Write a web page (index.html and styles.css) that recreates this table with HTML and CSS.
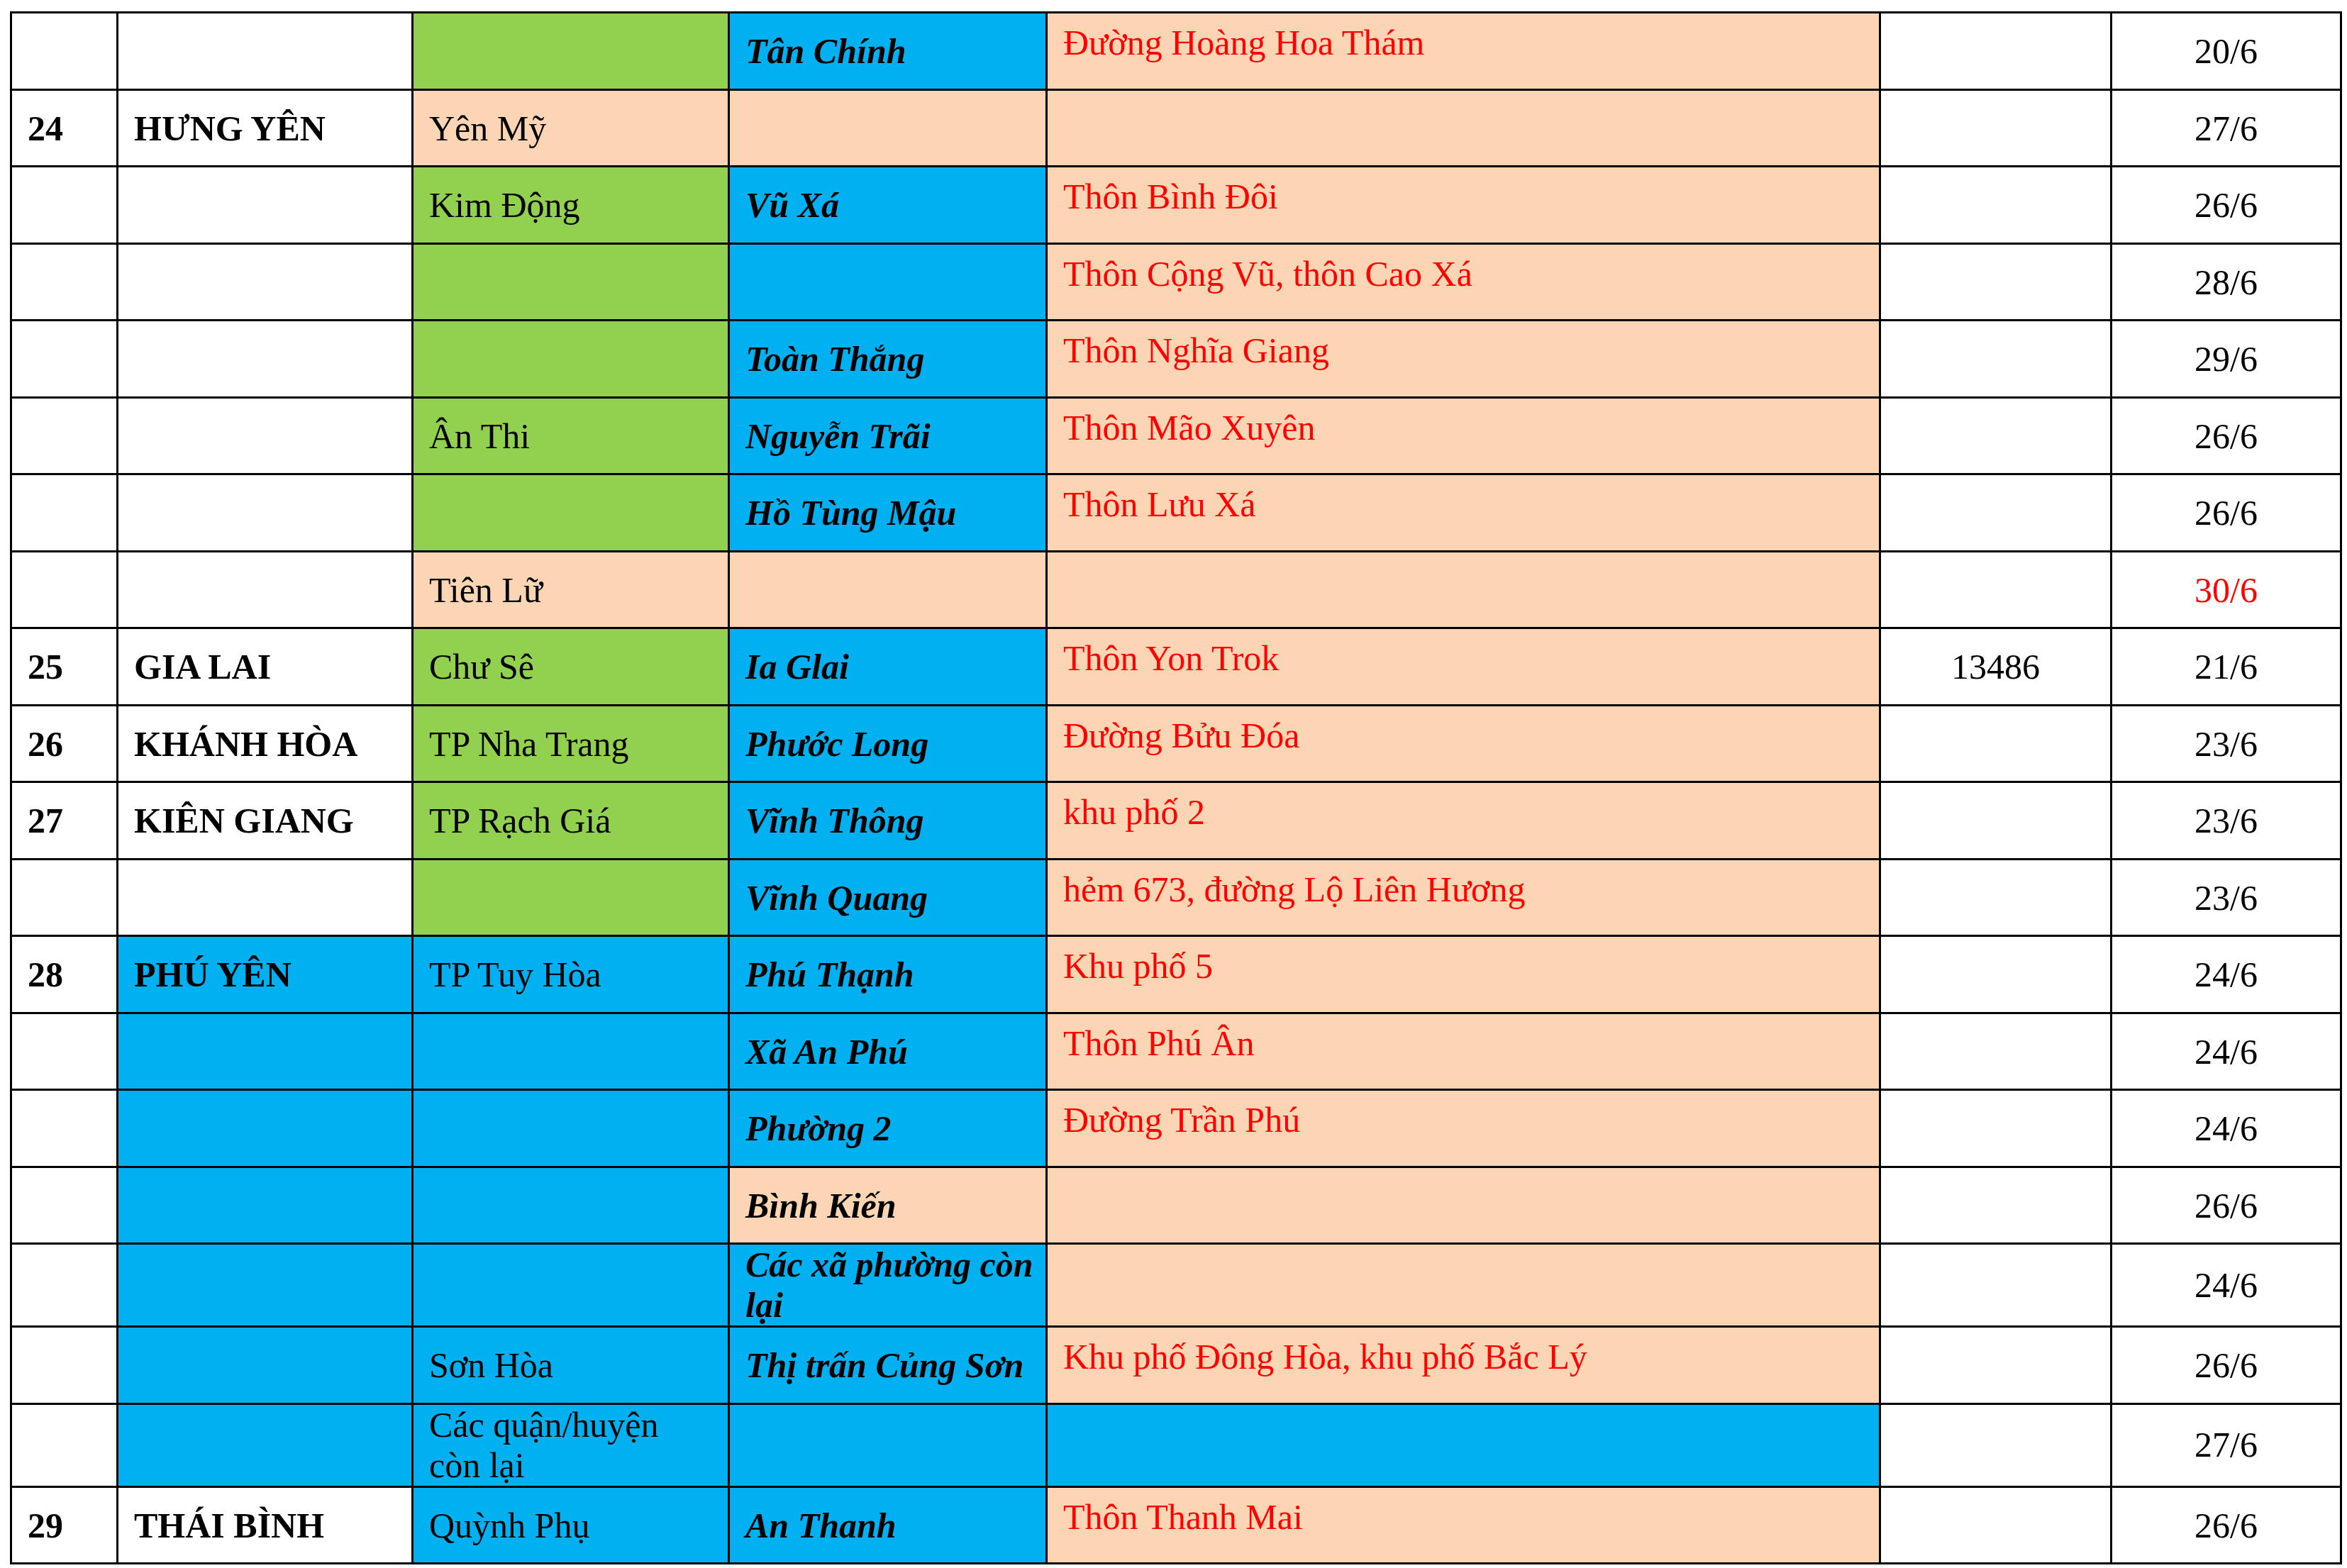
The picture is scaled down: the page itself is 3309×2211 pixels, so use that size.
FILE: index.html
```html
<!DOCTYPE html>
<html lang="vi">
<head>
<meta charset="utf-8">
<title>Bảng</title>
<link rel="stylesheet" href="styles.css">
</head>
<body>
<div class="sheet">
  <div class="row">
    <div class="c no"></div><div class="c prov"></div><div class="c dist g"></div><div class="c ward b">Tân Chính</div><div class="c addr p">Đường Hoàng Hoa Thám</div><div class="c num"></div><div class="c date">20/6</div>
  </div>
  <div class="row">
    <div class="c no">24</div><div class="c prov">HƯNG YÊN</div><div class="c dist p">Yên Mỹ</div><div class="c ward p"></div><div class="c addr p"></div><div class="c num"></div><div class="c date">27/6</div>
  </div>
  <div class="row">
    <div class="c no"></div><div class="c prov"></div><div class="c dist g">Kim Động</div><div class="c ward b">Vũ Xá</div><div class="c addr p">Thôn Bình Đôi</div><div class="c num"></div><div class="c date">26/6</div>
  </div>
  <div class="row">
    <div class="c no"></div><div class="c prov"></div><div class="c dist g"></div><div class="c ward b"></div><div class="c addr p">Thôn Cộng Vũ, thôn Cao Xá</div><div class="c num"></div><div class="c date">28/6</div>
  </div>
  <div class="row">
    <div class="c no"></div><div class="c prov"></div><div class="c dist g"></div><div class="c ward b">Toàn Thắng</div><div class="c addr p">Thôn Nghĩa Giang</div><div class="c num"></div><div class="c date">29/6</div>
  </div>
  <div class="row">
    <div class="c no"></div><div class="c prov"></div><div class="c dist g">Ân Thi</div><div class="c ward b">Nguyễn Trãi</div><div class="c addr p">Thôn Mão Xuyên</div><div class="c num"></div><div class="c date">26/6</div>
  </div>
  <div class="row">
    <div class="c no"></div><div class="c prov"></div><div class="c dist g"></div><div class="c ward b">Hồ Tùng Mậu</div><div class="c addr p">Thôn Lưu Xá</div><div class="c num"></div><div class="c date">26/6</div>
  </div>
  <div class="row">
    <div class="c no"></div><div class="c prov"></div><div class="c dist p">Tiên Lữ</div><div class="c ward p"></div><div class="c addr p"></div><div class="c num"></div><div class="c date red">30/6</div>
  </div>
  <div class="row">
    <div class="c no">25</div><div class="c prov">GIA LAI</div><div class="c dist g">Chư Sê</div><div class="c ward b">Ia Glai</div><div class="c addr p">Thôn Yon Trok</div><div class="c num">13486</div><div class="c date">21/6</div>
  </div>
  <div class="row">
    <div class="c no">26</div><div class="c prov">KHÁNH HÒA</div><div class="c dist g">TP Nha Trang</div><div class="c ward b">Phước Long</div><div class="c addr p">Đường Bửu Đóa</div><div class="c num"></div><div class="c date">23/6</div>
  </div>
  <div class="row">
    <div class="c no">27</div><div class="c prov">KIÊN GIANG</div><div class="c dist g">TP Rạch Giá</div><div class="c ward b">Vĩnh Thông</div><div class="c addr p">khu phố 2</div><div class="c num"></div><div class="c date">23/6</div>
  </div>
  <div class="row">
    <div class="c no"></div><div class="c prov"></div><div class="c dist g"></div><div class="c ward b">Vĩnh Quang</div><div class="c addr p">hẻm 673, đường Lộ Liên Hương</div><div class="c num"></div><div class="c date">23/6</div>
  </div>
  <div class="row">
    <div class="c no">28</div><div class="c prov b">PHÚ YÊN</div><div class="c dist b">TP Tuy Hòa</div><div class="c ward b">Phú Thạnh</div><div class="c addr p">Khu phố 5</div><div class="c num"></div><div class="c date">24/6</div>
  </div>
  <div class="row">
    <div class="c no"></div><div class="c prov b"></div><div class="c dist b"></div><div class="c ward b">Xã An Phú</div><div class="c addr p">Thôn Phú Ân</div><div class="c num"></div><div class="c date">24/6</div>
  </div>
  <div class="row">
    <div class="c no"></div><div class="c prov b"></div><div class="c dist b"></div><div class="c ward b">Phường 2</div><div class="c addr p">Đường Trần Phú</div><div class="c num"></div><div class="c date">24/6</div>
  </div>
  <div class="row">
    <div class="c no"></div><div class="c prov b"></div><div class="c dist b"></div><div class="c ward p">Bình Kiến</div><div class="c addr p"></div><div class="c num"></div><div class="c date">26/6</div>
  </div>
  <div class="row tall">
    <div class="c no"></div><div class="c prov b"></div><div class="c dist b"></div><div class="c ward b">Các xã phường còn<br>lại</div><div class="c addr p"></div><div class="c num"></div><div class="c date">24/6</div>
  </div>
  <div class="row">
    <div class="c no"></div><div class="c prov b"></div><div class="c dist b">Sơn Hòa</div><div class="c ward b">Thị trấn Củng Sơn</div><div class="c addr p">Khu phố Đông Hòa, khu phố Bắc Lý</div><div class="c num"></div><div class="c date">26/6</div>
  </div>
  <div class="row tall">
    <div class="c no"></div><div class="c prov b"></div><div class="c dist b">Các quận/huyện<br>còn lại</div><div class="c ward b"></div><div class="c addr b"></div><div class="c num"></div><div class="c date">27/6</div>
  </div>
  <div class="row">
    <div class="c no">29</div><div class="c prov">THÁI BÌNH</div><div class="c dist b">Quỳnh Phụ</div><div class="c ward b">An Thanh</div><div class="c addr p">Thôn Thanh Mai</div><div class="c num"></div><div class="c date">26/6</div>
  </div>
</div>
</body>
</html>
```

FILE: styles.css
```css
html, body {
  margin: 0;
  padding: 0;
  background: #ffffff;
}

body {
  font-family: "Liberation Serif", "Times New Roman", serif;
  font-size: 50px;
  color: #000000;
}

.sheet {
  display: flex;
  flex-direction: column;
  gap: 3px;
  width: max-content;
  margin: 16px 0 0 14px;
  padding: 3px;
  background: #000000;
}

.row {
  display: grid;
  grid-template-columns: 147px 413px 443px 445px 1172px 323px 321px;
  column-gap: 3px;
  height: 105.5px;
}

.row.tall {
  height: 114px;
}

.c {
  display: flex;
  align-items: center;
  padding: 2px 22px 0 22px;
  background: #ffffff;
  line-height: 57px;
  white-space: nowrap;
  overflow: visible;
}

.tall .c {
  padding-top: 0;
}

.no, .prov {
  font-weight: bold;
}

.ward {
  font-weight: bold;
  font-style: italic;
}

.addr {
  align-items: flex-start;
  padding-top: 13px;
  color: #ff0000;
}

.num, .date {
  justify-content: center;
  padding-left: 0;
  padding-right: 0;
}

.red {
  color: #ff0000;
}

.g {
  background: #92d050;
}

.b {
  background: #00b0f0;
}

.p {
  background: #fcd5b4;
}
```
